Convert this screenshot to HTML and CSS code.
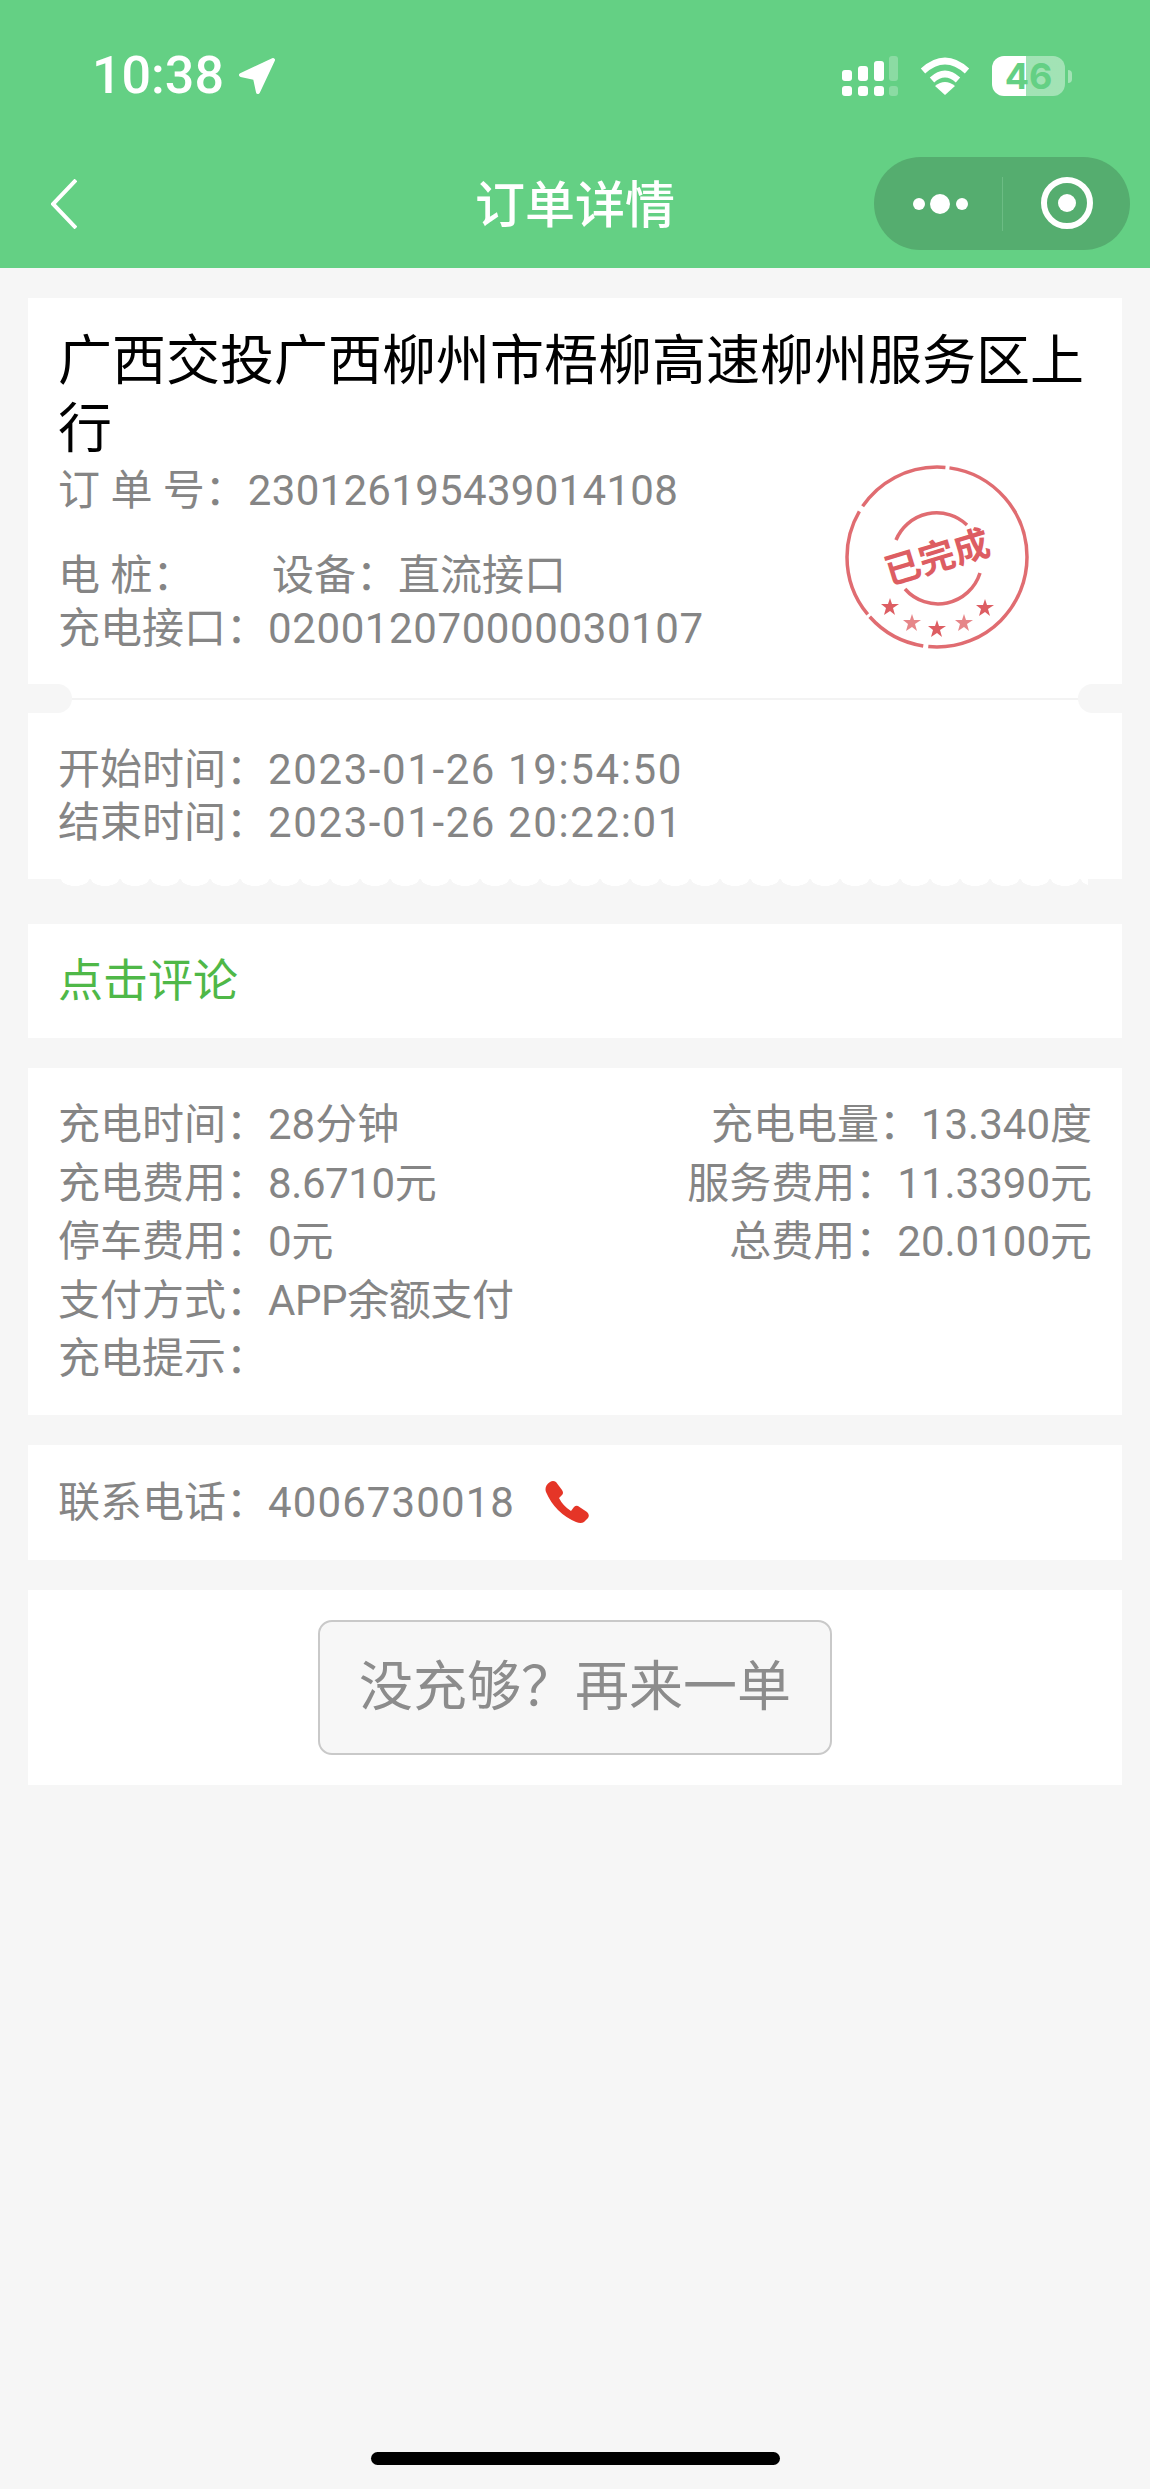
FILE: index.html
```html
<!DOCTYPE html>
<html>
<head>
    <meta charset="utf-8">
    <title>订单详情</title>
    <link rel="stylesheet" href="styles.css">
</head>
<body>
    <div class="header">
        <div class="status-bar">
            <div class="status-time">
                <span>10:38</span>
                <svg width="38" height="38" viewBox="0 0 38 38"><polygon points="35,3 3,18 17,21 20,35" fill="#fff" stroke="#fff" stroke-width="4" stroke-linejoin="round"/></svg>
            </div>
            <div class="status-icons">
                <svg width="56" height="40" viewBox="0 0 56 40">
                    <g fill="#fff">
                        <rect x="0" y="14" width="10" height="11" rx="3"/>
                        <rect x="16" y="10" width="10" height="15" rx="3"/>
                        <rect x="32" y="5" width="10" height="20" rx="3"/>
                        <rect x="0" y="30" width="10" height="10" rx="3"/>
                        <rect x="16" y="30" width="10" height="10" rx="3"/>
                        <rect x="32" y="30" width="10" height="10" rx="3"/>
                    </g>
                    <g fill="#fff" opacity="0.25">
                        <rect x="47" y="0" width="9" height="25" rx="3"/>
                        <rect x="47" y="30" width="9" height="10" rx="3"/>
                    </g>
                </svg>
                <svg width="50" height="38" viewBox="0 0 50 38">
                    <path d="M3 14 Q25 -6 47 14" fill="none" stroke="#fff" stroke-width="6.5"/>
                    <path d="M12 23 Q25 11 38 23" fill="none" stroke="#fff" stroke-width="6.5"/>
                    <path d="M25 38 L15 29 Q25 21 35 29 Z" fill="#fff"/>
                </svg>
                <div class="battery">
                    <div class="battery-body">46</div>
                    <div class="battery-tip"></div>
                </div>
            </div>
        </div>
        <div class="nav-bar">
            <svg class="nav-back" width="26" height="50" viewBox="0 0 26 50"><path d="M25 1 L2 25 L25 49" fill="none" stroke="#fff" stroke-width="4"/></svg>
            <div class="nav-title">订单详情</div>
            <div class="capsule">
                <svg width="128" height="93" viewBox="0 0 128 93">
                    <circle cx="45" cy="47" r="6" fill="#fff"/>
                    <circle cx="66" cy="47" r="10" fill="#fff"/>
                    <circle cx="88" cy="47" r="6" fill="#fff"/>
                </svg>
                <div class="capsule-line"></div>
                <svg width="127" height="93" viewBox="0 0 127 93">
                    <circle cx="64" cy="46" r="23" fill="none" stroke="#fff" stroke-width="6"/>
                    <circle cx="64" cy="46" r="9" fill="#fff"/>
                </svg>
            </div>
        </div>
    </div>

    <div class="content">
        <div class="ticket">
            <div class="ticket-top">
                <div class="station-name">广西交投广西柳州市梧柳高速柳州服务区上行</div>
                <div class="text-row">订 单 号：<span class="num-order">230126195439014108</span></div>
                <div class="text-row pile-row"><span class="pile-label">电 桩：</span><span>设备：直流接口</span></div>
                <div class="text-row">充电接口：<span class="num-port">020012070000030107</span></div>
                <svg class="stamp" width="200" height="200" viewBox="0 0 200 200">
                    <g fill="none" stroke="#dd5d62" stroke-width="3.5" opacity="0.9">
                        <circle cx="100" cy="100" r="90" stroke-dasharray="150 5 62 3 110 6 96 4 140"/>
                        <path d="M59 83 A44 44 0 0 1 130 68"/>
                        <path d="M68 132 A44 44 0 0 0 143 116"/>
                    </g>
                    <text class="stamp-text" x="100" y="113" text-anchor="middle" transform="rotate(-17 100 100)">已完成</text>
                    <g fill="#dd5d62">
                        <polygon points="53,141 55,147 62,147 56,151 58,158 53,154 47,158 49,151 44,147 51,147"/>
                        <polygon points="75,157 77,163 84,163 78,167 80,174 75,170 69,174 71,167 66,163 73,163" opacity="0.75"/>
                        <polygon points="100,163 102,169 109,169 103,173 105,180 100,176 94,180 96,173 91,169 98,169"/>
                        <polygon points="127,157 129,163 136,163 130,167 132,174 127,170 121,174 123,167 118,163 125,163" opacity="0.75"/>
                        <polygon points="148,142 150,148 157,148 151,152 153,159 148,155 142,159 144,152 139,148 146,148"/>
                    </g>
                </svg>
            </div>
            <div class="tear">
                <div class="notch notch-left"></div>
                <div class="tear-line"></div>
                <div class="notch notch-right"></div>
            </div>
            <div class="ticket-bottom">
                <div class="text-row">开始时间：<span class="num-time">2023-01-26 19:54:50</span></div>
                <div class="text-row">结束时间：<span class="num-time">2023-01-26 20:22:01</span></div>
            </div>
            <div class="scallop"></div>
        </div>

        <div class="card comment-card">点击评论</div>

        <div class="card info-card">
            <div class="info-row"><span>充电时间：28分钟</span><span>充电电量：13.340度</span></div>
            <div class="info-row"><span>充电费用：<span class="num-tight">8.6710元</span></span><span>服务费用：11.3390元</span></div>
            <div class="info-row"><span>停车费用：0元</span><span>总费用：20.0100元</span></div>
            <div class="info-row"><span>支付方式：<span class="num-tight">APP余额支付</span></span></div>
            <div class="info-row"><span>充电提示：</span></div>
        </div>

        <div class="card phone-card">
            <span>联系电话：<span class="num-phone">4006730018</span></span>
            <svg width="45" height="42" viewBox="0 0 45 42"><path d="M5 1 Q8 -1 11 1 L17 9 Q19 12 17 14 L14 17 Q18 25 26 30 L29 26 Q31 24 33 25 L42 31 Q45 34 43 37 L39 41 Q36 43 31 41 Q10 32 1 11 Q-1 5 5 1 Z" fill="#e53527"/></svg>
        </div>

        <div class="card button-card">
            <div class="again-button">没充够？再来一单</div>
        </div>
    </div>

    <div class="home-bar"></div>
</body>
</html>
```

FILE: styles.css
```css
* {
    box-sizing: border-box;
}

html,
body {
    height: 100%;
}

body {
    margin: 0;
    display: flex;
    flex-direction: column;
    background-color: #f6f6f6;
    font-family: Roboto, "Noto Sans CJK SC", sans-serif;
    color: #858585;
}

/* header */
.header {
    height: 268px;
    padding-top: 56px;
    background-color: #64d084;
    color: #fff;
}

.status-bar {
    height: 40px;
    padding: 0 78px 0 92px;
    display: flex;
    justify-content: space-between;
    align-items: center;
}

.status-time {
    display: flex;
    align-items: center;
    gap: 14px;
    font-size: 52px;
    font-weight: 500;
    line-height: 40px;
}

.status-icons {
    display: flex;
    align-items: center;
    gap: 22px;
}

.battery {
    display: flex;
    align-items: center;
    gap: 3px;
}

.battery-body {
    width: 73px;
    height: 40px;
    border-radius: 12px;
    background: linear-gradient(to right, #fff 34px, rgba(255, 255, 255, 0.4) 34px);
    color: #64d084;
    font-family: Inter, sans-serif;
    font-size: 36px;
    font-weight: 700;
    line-height: 40px;
    text-align: center;
}

.battery-tip {
    width: 4px;
    height: 13px;
    border-radius: 0 4px 4px 0;
    background-color: rgba(255, 255, 255, 0.4);
}

.nav-bar {
    height: 93px;
    margin-top: 61px;
    padding: 0 20px;
    display: grid;
    grid-template-columns: 1fr auto 1fr;
    align-items: center;
}

.nav-back {
    margin-left: 31px;
}

.nav-title {
    padding-bottom: 5px;
    font-size: 50px;
    font-weight: 500;
}

.capsule {
    width: 256px;
    height: 93px;
    justify-self: end;
    display: flex;
    align-items: center;
    border-radius: 47px;
    background-color: #55ad6f;
}

.capsule-line {
    width: 1px;
    height: 54px;
    background-color: #6cbc84;
}

/* cards */
.content {
    padding: 30px 28px 0;
}

.card {
    margin-bottom: 30px;
    background-color: #fff;
}

.text-row {
    font-size: 42px;
    line-height: 53px;
}

.ticket {
    margin-bottom: 38px;
}

.ticket-top {
    position: relative;
    height: 386px;
    padding: 30px 30px 0;
    background-color: #fff;
}

.station-name {
    font-size: 54px;
    line-height: 68px;
    color: #000;
}

.num-order {
    margin-left: 1px;
    letter-spacing: 0.3px;
}

.num-port {
    letter-spacing: 0.6px;
}

.num-time {
    letter-spacing: 1.6px;
}

.num-tight {
    letter-spacing: -0.4px;
}

.num-phone {
    letter-spacing: 1.1px;
}

.pile-row {
    margin-top: 32px;
    display: flex;
}

.pile-label {
    width: 214px;
}

.stamp {
    position: absolute;
    left: 809px;
    top: 159px;
}

.stamp-text {
    fill: #dd5d62;
    font-size: 36px;
    font-weight: 700;
}

.tear {
    height: 29px;
    display: flex;
    align-items: center;
    background-color: #fff;
}

.notch {
    width: 44px;
    height: 29px;
    background-color: #f6f6f6;
}

.notch-left {
    border-radius: 0 15px 15px 0;
}

.notch-right {
    border-radius: 15px 0 0 15px;
}

.tear-line {
    flex: 1;
    height: 2px;
    background-color: #f3f3f3;
}

.ticket-bottom {
    height: 166px;
    padding: 30px 30px 0;
    background-color: #fff;
}

.scallop {
    height: 7px;
    margin: 0 34px 0 32px;
    background: radial-gradient(ellipse 14px 7px at 15px 0, #fff 97%, transparent 100%) 0 0 / 30px 7px repeat-x;
}

.comment-card {
    height: 114px;
    padding-left: 30px;
    font-size: 45px;
    line-height: 116px;
    color: #4fb848;
}

.info-card {
    padding: 28px 30px 26px;
}

.info-row {
    display: flex;
    justify-content: space-between;
    font-size: 42px;
    line-height: 58.5px;
}

.phone-card {
    height: 115px;
    padding-left: 30px;
    display: flex;
    align-items: center;
    gap: 30px;
    font-size: 42px;
    line-height: 113px;
}

.button-card {
    padding: 30px 0;
    display: flex;
    justify-content: center;
}

.again-button {
    width: 514px;
    height: 135px;
    border: 2px solid #c9c9c9;
    border-radius: 14px;
    background-color: #f7f7f7;
    color: #8c8c8c;
    font-size: 54px;
    line-height: 131px;
    text-align: center;
}

.home-bar {
    width: 409px;
    height: 13px;
    margin: auto auto 24px;
    border-radius: 7px;
    background-color: #000;
}
```
